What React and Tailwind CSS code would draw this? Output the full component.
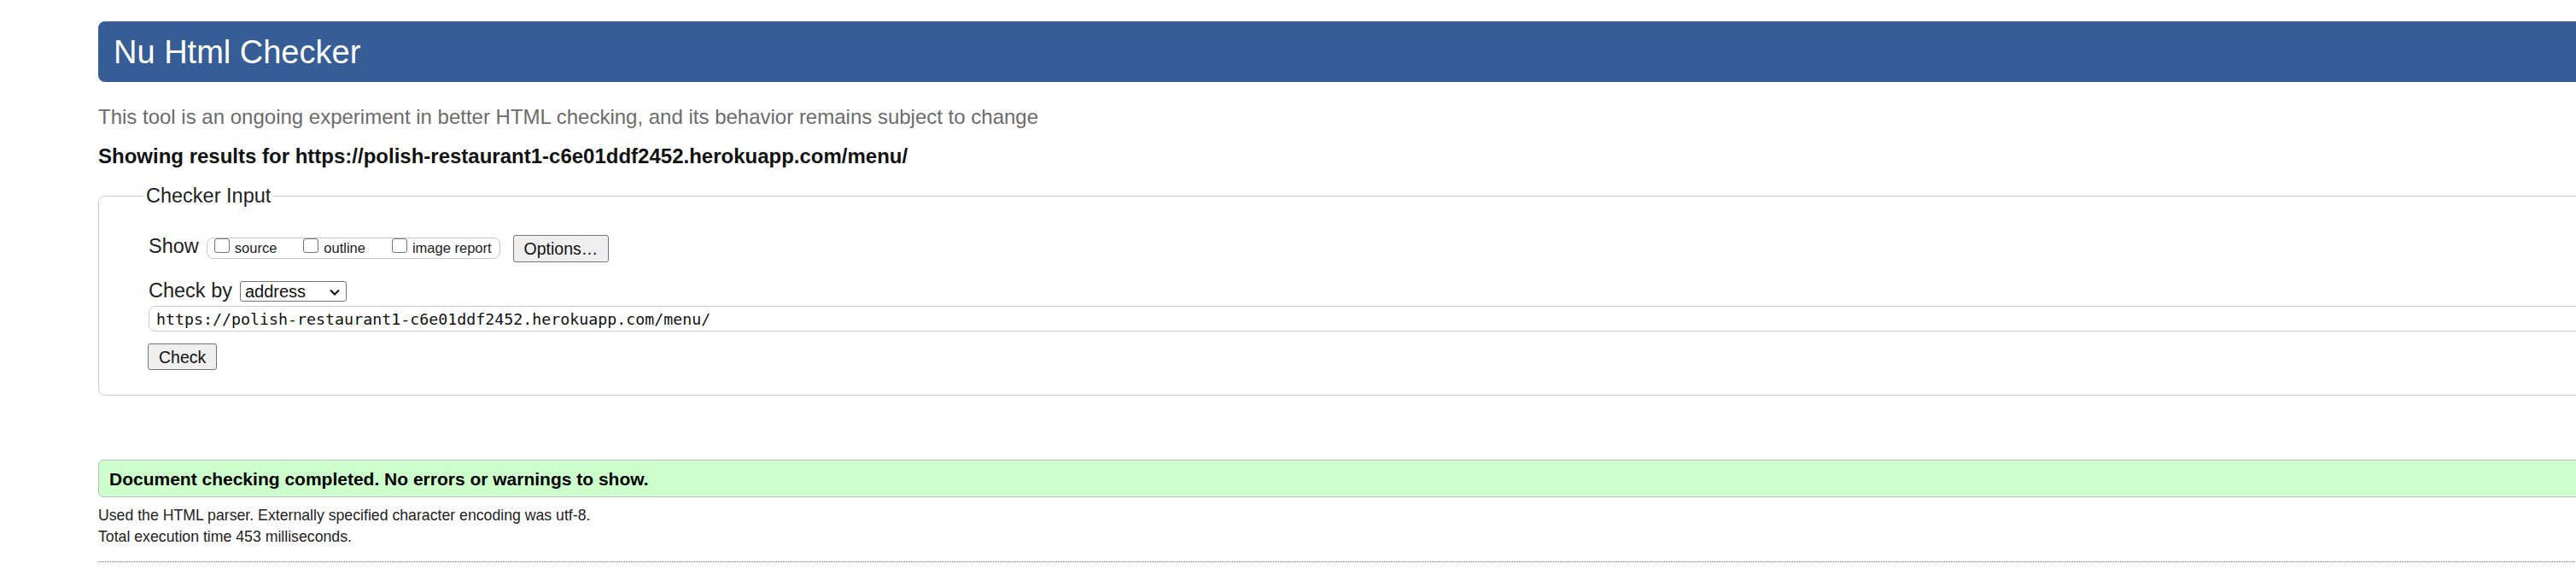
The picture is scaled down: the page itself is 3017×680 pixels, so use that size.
export default function App() {
  const boxes = [
    { label: "source", gap: "" },
    { label: "outline", gap: "ml-[31px]" },
    { label: "image report", gap: "ml-[31px]" },
  ];

  return (
    <div className="w-full min-h-screen overflow-hidden bg-white font-['Liberation_Sans',Arial,sans-serif] text-[#222]">
      <div className="w-[3200px] pl-[115px] pt-[25px]">
        <h1 className="h-[71px] flex items-center pl-[18px] rounded-l-[8px] bg-[#365d95] text-white text-[38px] leading-[44px] font-normal">
          Nu Html Checker
        </h1>

        <p className="mt-[27px] text-[24px] leading-[28px] text-[#6b6b6b]">
          This tool is an ongoing experiment in better HTML checking, and its
          behavior remains subject to change
        </p>
        <p className="mt-[18px] text-[24px] leading-[28px] font-bold text-[#111]">
          Showing results for
          https://polish-restaurant1-c6e01ddf2452.herokuapp.com/menu/
        </p>

        <fieldset className="mt-[19px] border border-[#ccc] rounded-[8px] pl-[52px] pt-[33px] pb-[29px]">
          <legend className="px-[3px] text-[23.5px] leading-[26px] text-[#1f1f1f]">
            Checker Input
          </legend>
          <div className="pl-[6px] flex flex-col">
            <div className="flex items-start h-[32px]">
              <span className="text-[23.5px] leading-[26px]">Show</span>
              <div className="ml-[9px] mt-[3px] h-[25px] flex items-start pl-[8px] pr-[9px] border border-[#c8c8c8] rounded-[8px]">
                {boxes.map((b) => (
                  <div key={b.label} className={`flex items-start ${b.gap}`}>
                    <span className="w-[18px] h-[17px] border border-[#767676] rounded-[3px] bg-white" />
                    <span className="ml-[6px] mt-[2px] text-[16.5px] leading-[18px]">
                      {b.label}
                    </span>
                  </div>
                ))}
              </div>
              <button className="ml-[15px] h-[32px] px-[12px] flex items-center bg-[#efefef] border border-[#767676] rounded-[3px] text-[19.5px] leading-[22px] text-[#111]">
                Options…
              </button>
            </div>

            <div className="mt-[20px] flex items-start h-[26px]">
              <span className="text-[23.5px] leading-[26px]">Check by</span>
              <div className="ml-[9px] mt-[2px] w-[125px] h-[24px] flex items-start justify-between pl-[5px] pr-[7px] bg-white border border-[#767676] rounded-[3px]">
                <span className="text-[20px] leading-[22px] text-[#111]">address</span>
                <svg
                  className="mt-[8px]"
                  width="12"
                  height="8"
                  viewBox="0 0 12 8"
                  fill="none"
                  stroke="#111"
                  strokeWidth="2"
                >
                  <path d="M1 1.5L6 6.5L11 1.5" />
                </svg>
              </div>
            </div>

            <div className="mt-[5px] h-[30px] pl-[8px] pt-[5px] border border-[#ccc] rounded-[8px] font-['DejaVu_Sans_Mono',monospace] text-[18.3px] leading-[20px] text-[#111]">
              https://polish-restaurant1-c6e01ddf2452.herokuapp.com/menu/
            </div>

            <div className="mt-[14px]">
              <button className="h-[31px] px-[12px] -ml-px flex items-center bg-[#efefef] border border-[#767676] rounded-[3px] text-[19.5px] leading-[22px] text-[#111]">
                Check
              </button>
            </div>
          </div>
        </fieldset>

        <div className="mt-[75px] h-[44px] pl-[12px] pt-[11px] bg-[#ccffcc] border border-[#bdbdbd] rounded-[6px]">
          <p className="text-[21px] leading-[22px] font-bold text-black">
            Document checking completed. No errors or warnings to show.
          </p>
        </div>

        <p className="mt-[9px] text-[17.7px] leading-[25px] text-[#222]">
          Used the HTML parser. Externally specified character encoding was
          utf-8.
        </p>
        <p className="text-[17.7px] leading-[25px] text-[#222]">
          Total execution time 453 milliseconds.
        </p>
        <div className="mt-[16px] border-t border-dotted border-[#777]" />
      </div>
    </div>
  );
}
